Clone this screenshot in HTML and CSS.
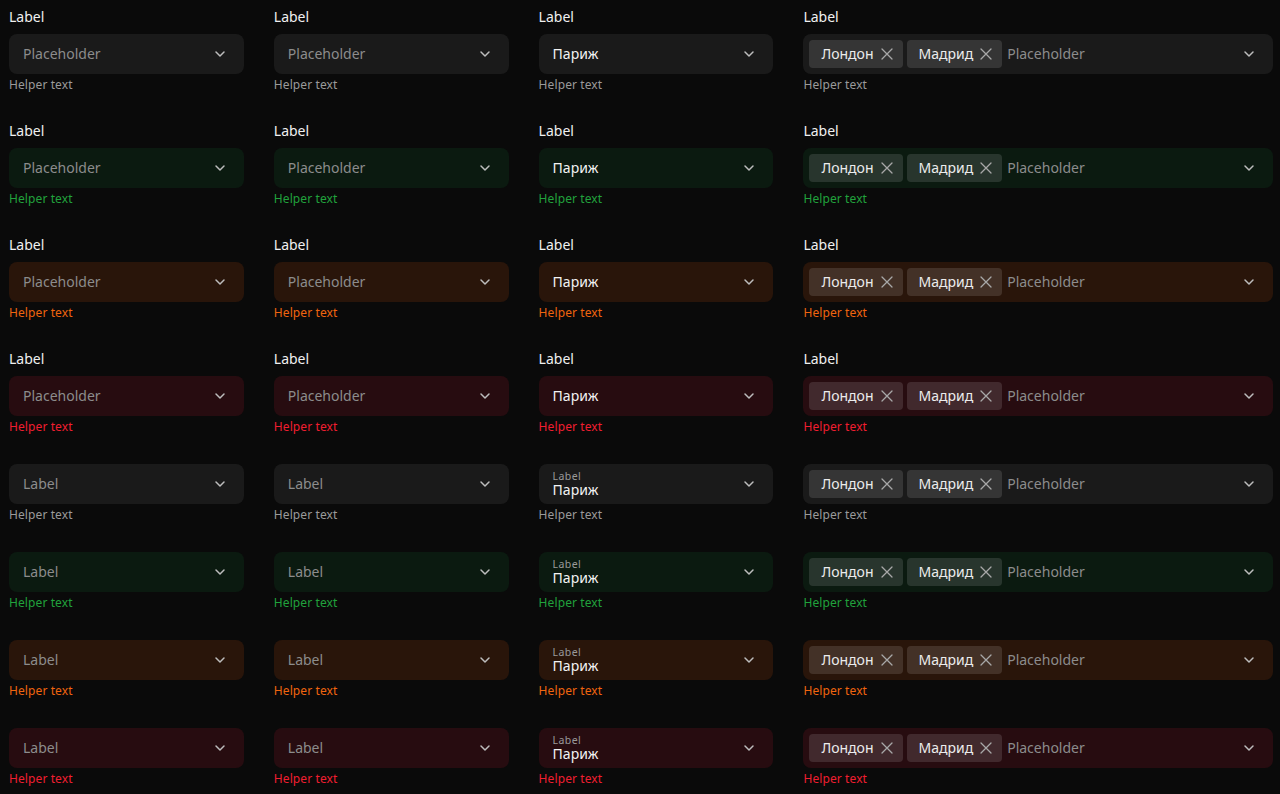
FILE: index.html
```html
<!DOCTYPE html>
<html lang="ru">
<head>
<meta charset="utf-8">
<title>Select fields</title>
<link rel="stylesheet" href="styles.css">
</head>
<body>
<div class="grid" id="grid"></div>
<script src="app.js"></script>
</body>
</html>
```
FILE: app.js
```js
(function () {
  var chevron = '<svg class="chev" width="16" height="16" viewBox="0 0 16 16"><path d="M4 6l4 4 4-4" fill="none" stroke="currentColor" stroke-width="1.5" stroke-linecap="round" stroke-linejoin="round"/></svg>';
  var cross = '<svg class="x" width="14" height="14" viewBox="0 0 14 14"><path d="M2 2l10 10M12 2L2 12" fill="none" stroke="currentColor" stroke-width="1.3" stroke-linecap="round"/></svg>';
  var states = ['neutral', 'success', 'warning', 'error'];
  var grid = document.getElementById('grid');
  var html = '';
  function tags() {
    return '<span class="tag"><span class="tt">Лондон</span>' + cross + '</span><span class="tag"><span class="tt">Мадрид</span>' + cross + '</span><span class="ph">Placeholder</span>';
  }
  [true, false].forEach(function (withLabel) {
    states.forEach(function (s) {
      for (var c = 0; c < 4; c++) {
        var inner;
        if (c < 2) inner = '<span class="ph">' + (withLabel ? 'Placeholder' : 'Label') + '</span>';
        else if (c === 2) inner = withLabel ? '<span class="val">Париж</span>' : '<span class="stack"><span class="mini">Label</span><span class="val sv">Париж</span></span>';
        else inner = tags();
        html += '<div class="cell ' + s + (c === 3 ? ' wide' : '') + '">' +
          (withLabel ? '<div class="label">Label</div>' : '') +
          '<div class="field' + (c === 3 ? ' tagfield' : '') + '"><div class="content">' + inner + '</div>' + chevron + '</div>' +
          '<div class="helper">Helper text</div></div>';
      }
    });
  });
  grid.innerHTML = html;
})();
```
FILE: styles.css
```css
html, body {
  margin: 0;
  background: #0a0a0a;
}
body {
  padding: 8px 7px 0 9px;
  font-family: "Noto Sans", "Open Sans", sans-serif;
  color: #e6e6e6;
}
.grid {
  display: grid;
  grid-template-columns: 1fr 1fr 1fr 2fr;
  column-gap: 30px;
  row-gap: 30px;
}
.cell {
  display: flex;
  flex-direction: column;
}
.label {
  font-size: 14px;
  line-height: 18px;
  margin-bottom: 8px;
  color: #f0f0f0;
}
.field {
  height: 40px;
  border-radius: 8px;
  background: #1a1a1a;
  display: flex;
  align-items: center;
  padding: 0 16px 0 14px;
  box-sizing: border-box;
}
.tagfield {
  padding-left: 6px;
}
.content {
  flex: 1;
  display: flex;
  align-items: center;
  gap: 4px;
  min-width: 0;
}
.ph {
  font-size: 14px;
  line-height: 18px;
  margin-bottom: 1px;
  color: #8c8c8c;
}
.tagfield .ph {
  margin-left: 1px;
}
.val {
  font-size: 14px;
  line-height: 18px;
  margin-bottom: 1px;
  color: #f2f2f2;
}
.stack {
  display: flex;
  flex-direction: column;
}
.mini {
  font-size: 10.5px;
  line-height: 12px;
  color: #9a9a9a;
  letter-spacing: 0.4px;
}
.sv {
  line-height: 16px;
  margin-bottom: 0;
}
.chev {
  color: #bdbdbd;
  flex: none;
}
.tag {
  height: 28px;
  box-sizing: border-box;
  display: inline-flex;
  align-items: center;
  gap: 6px;
  padding: 0 9px 0 12px;
  border-radius: 4px;
  background: rgba(255, 255, 255, 0.12);
  font-size: 14px;
  color: #ececec;
}
.tt {
  line-height: 18px;
  margin-bottom: 1px;
}
.x {
  color: #a8a8a8;
}
.helper {
  font-size: 12px;
  line-height: 14px;
  margin-top: 4px;
  color: #9a9a9a;
  letter-spacing: 0.1px;
}
.success .field { background: #0b1a10; }
.success .helper { color: #21a23c; }
.warning .field { background: #29150a; }
.warning .helper { color: #f0650f; }
.error .field { background: #270c10; }
.error .helper { color: #f01e30; }
```
